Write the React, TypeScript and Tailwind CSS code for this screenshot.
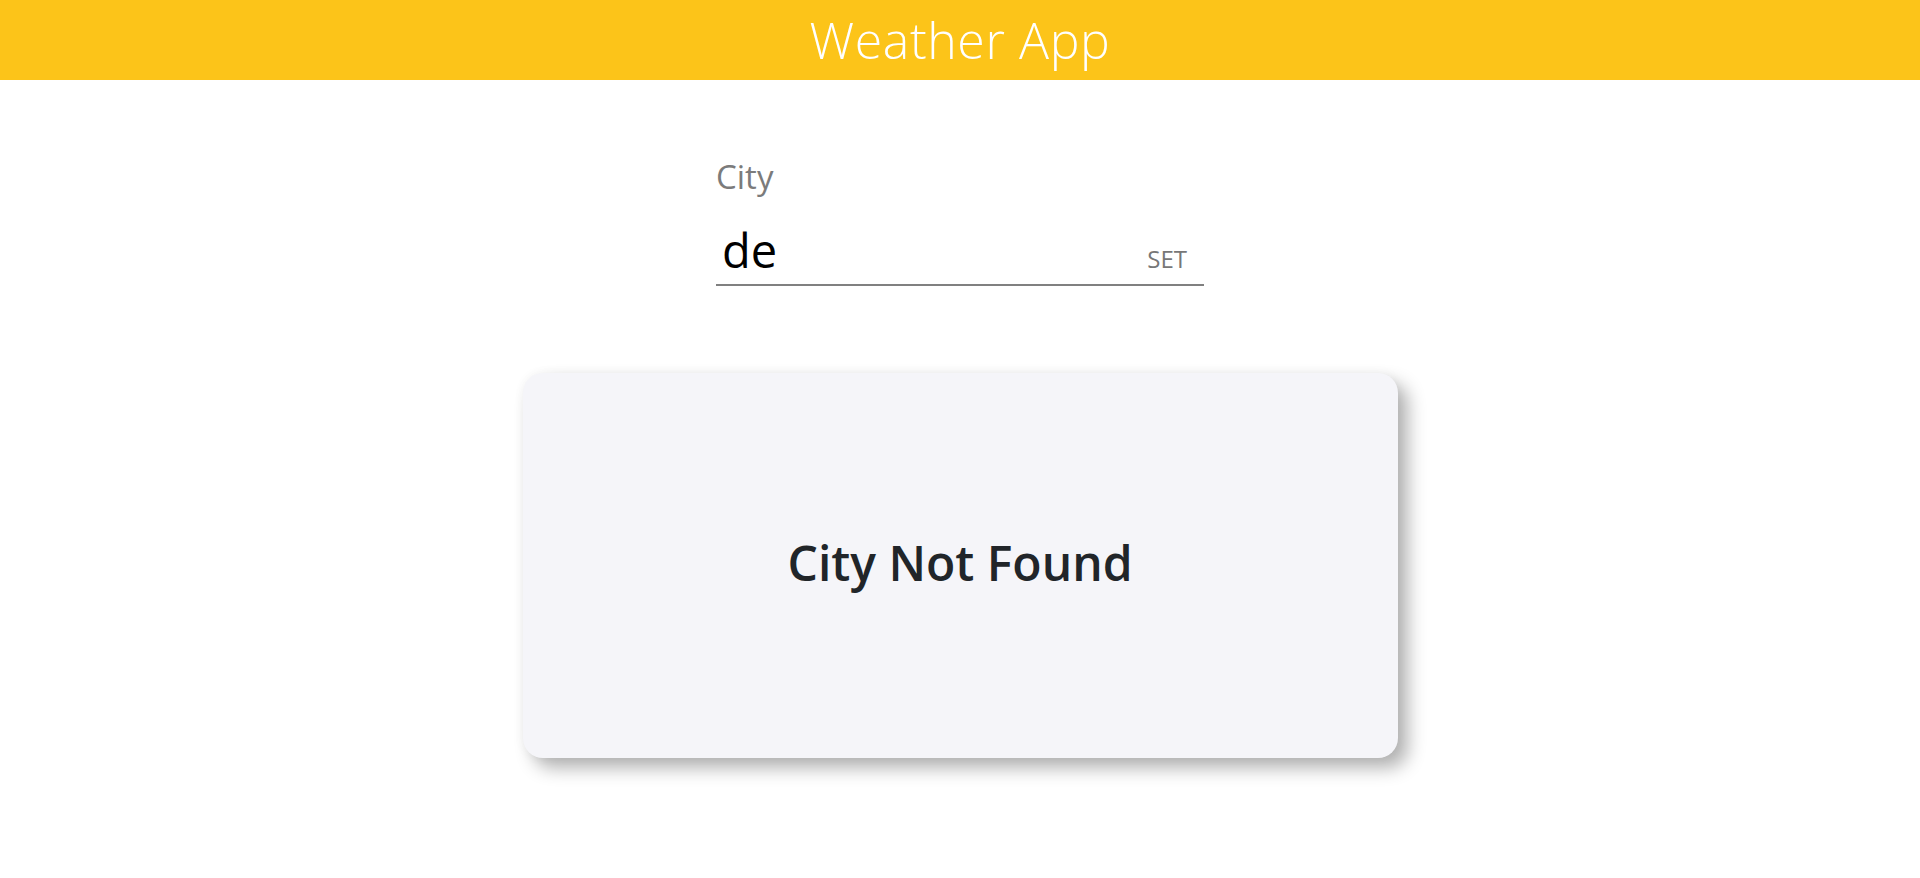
import React from "react";

export default function App() {
  return (
    <div className="min-h-screen bg-white" style={{ fontFamily: '"Open Sans", "Noto Sans", sans-serif' }}>
      <header className="h-[80px] bg-[#fcc419] flex items-center justify-center">
        <h1 className="text-white text-[50px] font-light leading-none tracking-[0.6px]">Weather App</h1>
      </header>
      <div className="w-[488px] mx-auto mt-[80px]">
        <label className="block text-[33px] leading-none text-[#7b7b7b]">City</label>
        <div className="mt-[34px] flex items-baseline border-b-2 border-[#808080] pb-[10px] pl-[6px] pr-[17px]">
          <span className="text-[47px] leading-none text-black">de</span>
          <span className="ml-auto text-[24px] leading-none text-[#777777]">SET</span>
        </div>
      </div>
      <div className="w-[875px] h-[385px] mx-auto mt-[87px] rounded-[20px] bg-[#f5f5f9] shadow-[10px_10px_18px_rgba(0,0,0,0.3),0_0_12px_rgba(0,0,0,0.04)] flex items-center justify-center pb-[5px]">
        <h2 className="text-[48px] font-semibold leading-none text-[#212529]">City Not Found</h2>
      </div>
    </div>
  );
}
